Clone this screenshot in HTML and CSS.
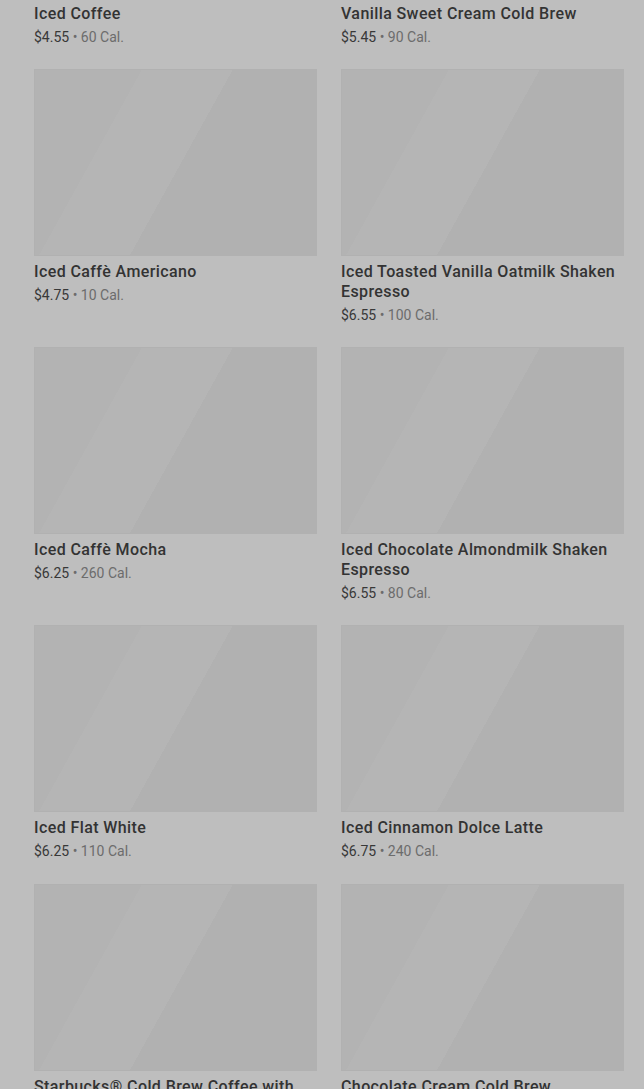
FILE: index.html
```html
<!DOCTYPE html>
<html lang="en">
<head>
<meta charset="utf-8">
<title>Cold Coffees</title>
<link rel="stylesheet" href="styles.css">
</head>
<body>
<main class="menu">
  <ul class="grid">
    <li class="card"><div class="thumb"></div><h3 class="name">Iced Coffee</h3><p class="meta"><span class="price">$4.55</span> • <span class="cal">60 Cal.</span></p></li>
    <li class="card"><div class="thumb"></div><h3 class="name">Vanilla Sweet Cream Cold Brew</h3><p class="meta"><span class="price">$5.45</span> • <span class="cal">90 Cal.</span></p></li>
    <li class="card"><div class="thumb"></div><h3 class="name">Iced Caffè Americano</h3><p class="meta"><span class="price">$4.75</span> • <span class="cal">10 Cal.</span></p></li>
    <li class="card"><div class="thumb"></div><h3 class="name">Iced Toasted Vanilla Oatmilk Shaken Espresso</h3><p class="meta"><span class="price">$6.55</span> • <span class="cal">100 Cal.</span></p></li>
    <li class="card"><div class="thumb"></div><h3 class="name">Iced Caffè Mocha</h3><p class="meta"><span class="price">$6.25</span> • <span class="cal">260 Cal.</span></p></li>
    <li class="card"><div class="thumb"></div><h3 class="name">Iced Chocolate Almondmilk Shaken Espresso</h3><p class="meta"><span class="price">$6.55</span> • <span class="cal">80 Cal.</span></p></li>
    <li class="card"><div class="thumb"></div><h3 class="name">Iced Flat White</h3><p class="meta"><span class="price">$6.25</span> • <span class="cal">110 Cal.</span></p></li>
    <li class="card"><div class="thumb"></div><h3 class="name">Iced Cinnamon Dolce Latte</h3><p class="meta"><span class="price">$6.75</span> • <span class="cal">240 Cal.</span></p></li>
    <li class="card"><div class="thumb"></div><h3 class="name">Starbucks® Cold Brew Coffee with Milk</h3></li>
    <li class="card"><div class="thumb"></div><h3 class="name">Chocolate Cream Cold Brew</h3></li>
  </ul>
</main>
</body>
</html>
```
FILE: styles.css
```css
html, body {
  margin: 0;
  padding: 0;
  background: #bebebe;
  overflow: hidden;
}
body {
  font-family: Roboto, "Liberation Sans", Arial, sans-serif;
  color: #2c2c2c;
}
.menu {
  padding: 0 20px 0 34px;
}
.grid {
  list-style: none;
  margin: -189.5px 0 0 0;
  padding: 0;
  display: grid;
  grid-template-columns: 1fr 1fr;
  column-gap: 24px;
  row-gap: 22.3px;
}
.card {
  display: flex;
  flex-direction: column;
}
.thumb {
  height: 187px;
  background: linear-gradient(119deg, #b3b3b3 0%, #b3b3b3 28%, #b5b5b5 28%, #b5b5b5 51.5%, #b1b1b1 51.5%, #b1b1b1 100%);
  box-shadow: inset 0 0 0 1px #b1b1b1;
}
.name {
  margin: 6px 0 0 0;
  font-size: 16px;
  line-height: 20px;
  font-weight: 500;
  letter-spacing: 0.4px;
  color: #333333;
}
.meta {
  margin: 3px 0 0 0;
  font-size: 14px;
  line-height: 20px;
  color: #6c6c6c;
}
.price {
  color: #383838;
}
```
